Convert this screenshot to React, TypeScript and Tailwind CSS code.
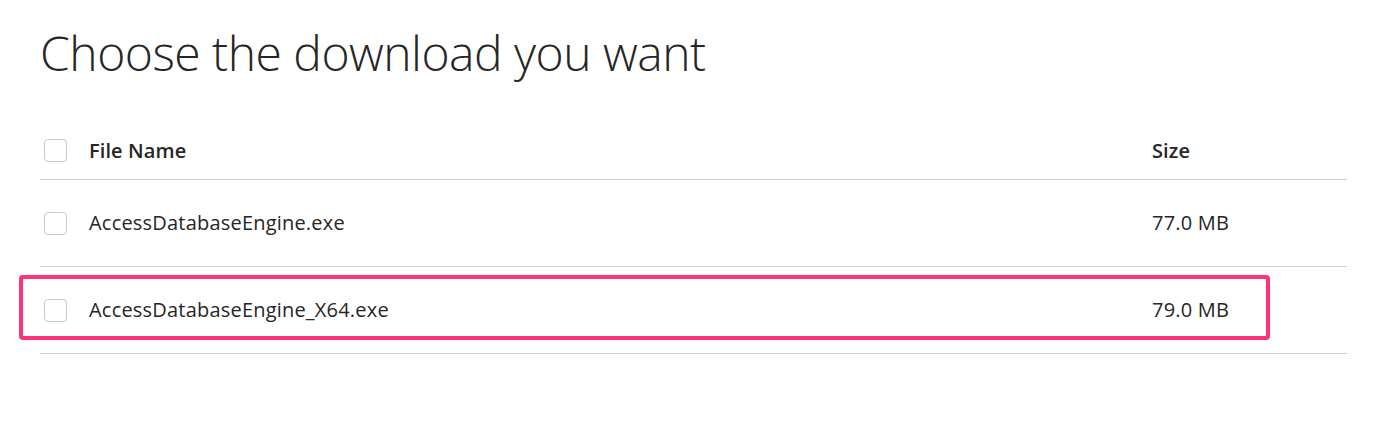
const files = [
    { name: 'AccessDatabaseEngine.exe', size: '77.0 MB', highlight: false },
    { name: 'AccessDatabaseEngine_X64.exe', size: '79.0 MB', highlight: true },
];

function Checkbox() {
    return <span className="block w-[23px] h-[23px] rounded-[4px] border border-[#c8c8c8] bg-white" />;
}

export default function App() {
    return (
        <div className="w-[1380px] h-[428px] bg-white text-[#262626] font-['Open_Sans',sans-serif]">
            <div className="pl-[40px] pr-[33px]">
                {/* Heading */}
                <h1 className="pt-[20px] text-[48px] leading-[66px] font-light tracking-[-0.5px] text-[#262626]">
                    Choose the download you want
                </h1>

                {/* Table */}
                <div className="mt-[36px]">
                    <div className="flex items-center h-[58px] border-b border-[#d0d0d0]">
                        <div className="w-[49px] pl-[4px]"><Checkbox /></div>
                        <div className="flex-1 text-[20px] font-semibold tracking-[0.1px]">File Name</div>
                        <div className="w-[195px] text-[20px] font-semibold tracking-[0.1px]">Size</div>
                    </div>
                    {files.map(f => (
                        <div key={f.name} className="relative flex items-center h-[87px] border-b border-[#d0d0d0]">
                            <div className="w-[49px] pl-[4px]"><Checkbox /></div>
                            <div className="flex-1 text-[20px] tracking-[0.2px]">{f.name}</div>
                            <div className="w-[195px] text-[20px] tracking-[0.2px]">{f.size}</div>
                            {f.highlight && (
                                <div className="absolute left-[-21px] right-[77px] top-[8px] bottom-[13px] border-[4px] border-[#ff3372] rounded-[4px]" />
                            )}
                        </div>
                    ))}
                </div>
            </div>
        </div>
    );
}
